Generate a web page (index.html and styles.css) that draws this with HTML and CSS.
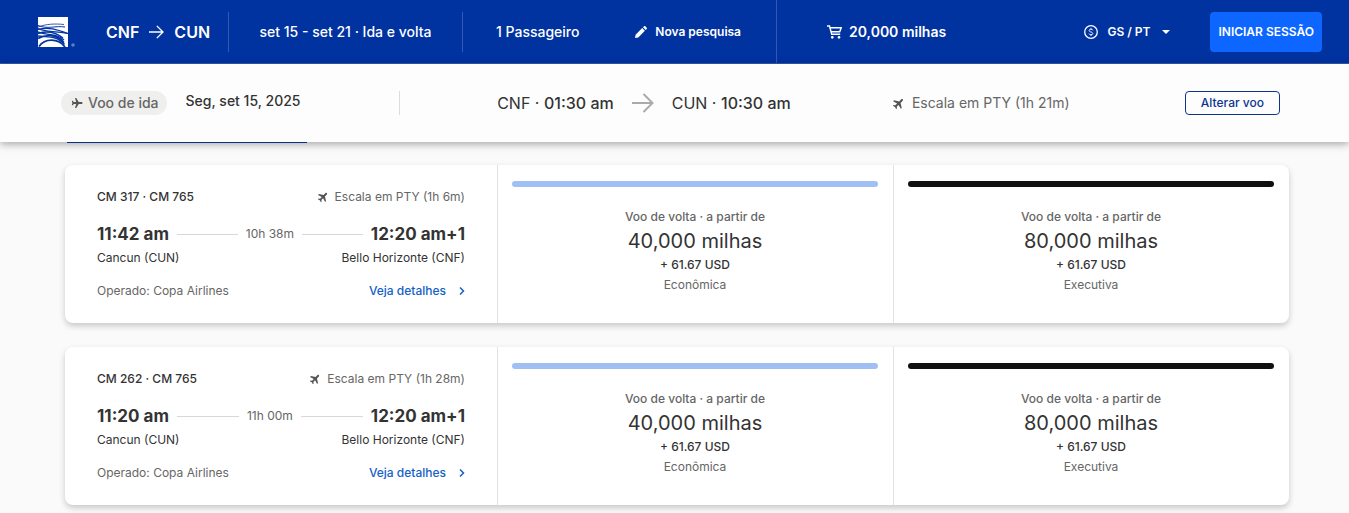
FILE: index.html
```html
<!DOCTYPE html>
<html lang="pt">
<head>
    <meta charset="UTF-8">
    <meta name="viewport" content="width=device-width, initial-scale=1.0">
    <title>Selecione seu voo</title>
    <link rel="stylesheet" href="styles.css">
</head>
<body>
    <!-- shared icons -->
    <svg class="sprite" aria-hidden="true">
        <symbol id="plane" viewBox="0 0 24 24">
            <path d="M23 12c0-1.100-.9-1.900-1.900-1.900H15.500L10.500 2H8l2.300 8.100H5.500L3.700 7.600H1.500L2.800 12l-1.300 4.400h2.200l1.800-2.500h4.800L8 22h2.500l5-8.100h5.600c1 0 1.900-.8 1.900-1.900z"/>
        </symbol>
        <symbol id="arrow" viewBox="0 0 22 20">
            <path d="M0 10h21M11.500 1l9 9-9 9" fill="none" stroke="currentColor" stroke-width="2"/>
        </symbol>
        <symbol id="chevron" viewBox="0 0 6 10">
            <path d="M1 1.500L4.500 5 1 8.500" fill="none" stroke="currentColor" stroke-width="1.500"/>
        </symbol>
    </svg>

    <header class="topbar">
        <div class="topbar-route">
            <a href="#" class="logo" aria-label="Copa Airlines">
                <svg width="37" height="30" viewBox="0 0 37 30">
                    <path fill="#fff" d="M0 0h30v30H0z"/>
                    <g fill="none" stroke="#0032a0">
                        <path stroke-width=".8" d="M0 10C8 7 17 6.500 26 7.500"/>
                        <path stroke-width="1" d="M0 8.500C9 12.500 18 8.500 27 10"/>
                        <path stroke-width="1.300" d="M0 12.500C10 9.500 19 12.500 30 16.500"/>
                        <path stroke-width="1.200" d="M0 11.500c8 4 15 2 30 5"/>
                        <path stroke-width="1.400" d="M0 16.500c9-3 18-1 25 4.500"/>
                        <path stroke-width="1.400" d="M0 15c9 4 18 .5 26 8"/>
                        <path stroke-width="1.600" d="M0 21.500C8 17 19 17 26 25.500"/>
                        <path stroke-width="1.400" d="M0 19c9 1.500 19-1 26.500 8.500"/>
                        <path stroke-width="1.800" d="M1 29.500c6-8.500 19-8.500 26 .5"/>
                    </g>
                    <circle cx="35" cy="28" r="1.800" fill="#5b7fd0"/>
                </svg>
            </a>
            <div class="route">
                <span>CNF</span>
                <svg width="15" height="14"><use href="#arrow"/></svg>
                <span>CUN</span>
            </div>
        </div>
        <div class="topbar-dates">set 15 - set 21 · Ida e volta</div>
        <div class="topbar-search">
            <span>1 Passageiro</span>
            <button class="new-search">
                <svg width="12" height="12" viewBox="0 0 12 12" fill="currentColor"><path d="M0 12l.6-3.300L7.200 2.100l2.700 2.700-6.600 6.600zM8 1.300L9 .3c.4-.4.9-.4 1.300 0l1.400 1.400c.4.4.4.9 0 1.300l-1 1z"/></svg>
                Nova pesquisa
            </button>
        </div>
        <div class="topbar-total">
            <svg width="15" height="14" viewBox="0 0 15 14" fill="none" stroke="currentColor" stroke-width="1.400"><path d="M0 1h2.500l2.200 8.300h8.500M3 2.800h11.200l-1.500 4H4.200"/><circle cx="5.300" cy="12.300" r=".7"/><circle cx="12" cy="12.300" r=".7"/></svg>
            20,000 milhas
        </div>
        <div class="topbar-user">
            <button class="locale">
                <svg width="14" height="14" viewBox="0 0 14 14" fill="none" stroke="currentColor"><circle cx="7" cy="7" r="6.300" stroke-width="1.300"/><path d="M8.800 5.300C8.600 4.500 7.900 4.200 7 4.200c-2.300 0-2.400 2.300-.4 2.700 2.900.5 2.800 2.900.4 2.900-1 0-1.700-.4-1.900-1.200M7 3.200v1M7 9.800v1"/></svg>
                GS / PT
                <svg class="caret" width="8" height="4" viewBox="0 0 8 4" fill="currentColor"><path d="M0 0h8L4 4z"/></svg>
            </button>
            <button class="login">INICIAR SESSÃO</button>
        </div>
    </header>

    <section class="selected">
        <div class="selected-date">
            <span class="pill"><svg width="12" height="12"><use href="#plane"/></svg>Voo de ida</span>
            <span class="date">Seg, set 15, 2025</span>
        </div>
        <div class="selected-times">
            <span>CNF · <b>01:30 am</b></span>
            <svg width="22" height="20"><use href="#arrow"/></svg>
            <span>CUN · <b>10:30 am</b></span>
        </div>
        <div class="selected-stop"><svg class="plane-up" width="13" height="13"><use href="#plane"/></svg>Escala em PTY (1h 21m)</div>
        <button class="change">Alterar voo</button>
    </section>

    <main class="flights">
        <div class="tab-line"></div>

        <article class="card">
            <div class="info">
                <div class="row">
                    <span class="number">CM 317 · CM 765</span>
                    <span class="stop"><svg class="plane-up" width="12" height="12"><use href="#plane"/></svg>Escala em PTY (1h 6m)</span>
                </div>
                <div class="row times">
                    <span class="time">11:42 am</span>
                    <span class="duration">10h 38m</span>
                    <span class="time">12:20 am+1</span>
                </div>
                <div class="row cities">
                    <span>Cancun (CUN)</span>
                    <span>Bello Horizonte (CNF)</span>
                </div>
                <div class="row operated">
                    <span>Operado: Copa Airlines</span>
                    <a href="#" class="details">Veja detalhes <svg width="6" height="10"><use href="#chevron"/></svg></a>
                </div>
            </div>
            <div class="fare">
                <div class="bar economy"></div>
                <span class="from">Voo de volta · a partir de</span>
                <span class="miles">40,000 milhas</span>
                <span class="tax">+ 61.67 USD</span>
                <span class="cabin">Econômica</span>
            </div>
            <div class="fare">
                <div class="bar business"></div>
                <span class="from">Voo de volta · a partir de</span>
                <span class="miles">80,000 milhas</span>
                <span class="tax">+ 61.67 USD</span>
                <span class="cabin">Executiva</span>
            </div>
        </article>

        <article class="card">
            <div class="info">
                <div class="row">
                    <span class="number">CM 262 · CM 765</span>
                    <span class="stop"><svg class="plane-up" width="12" height="12"><use href="#plane"/></svg>Escala em PTY (1h 28m)</span>
                </div>
                <div class="row times">
                    <span class="time">11:20 am</span>
                    <span class="duration">11h 00m</span>
                    <span class="time">12:20 am+1</span>
                </div>
                <div class="row cities">
                    <span>Cancun (CUN)</span>
                    <span>Bello Horizonte (CNF)</span>
                </div>
                <div class="row operated">
                    <span>Operado: Copa Airlines</span>
                    <a href="#" class="details">Veja detalhes <svg width="6" height="10"><use href="#chevron"/></svg></a>
                </div>
            </div>
            <div class="fare">
                <div class="bar economy"></div>
                <span class="from">Voo de volta · a partir de</span>
                <span class="miles">40,000 milhas</span>
                <span class="tax">+ 61.67 USD</span>
                <span class="cabin">Econômica</span>
            </div>
            <div class="fare">
                <div class="bar business"></div>
                <span class="from">Voo de volta · a partir de</span>
                <span class="miles">80,000 milhas</span>
                <span class="tax">+ 61.67 USD</span>
                <span class="cabin">Executiva</span>
            </div>
        </article>
    </main>
</body>
</html>
```
FILE: styles.css
```css
* {
    box-sizing: border-box;
}

body {
    margin: 0;
    font-family: Inter, "Liberation Sans", sans-serif;
    font-size: 12px;
    line-height: 16px;
    color: #333;
    background-color: #fafafa;
}

button {
    font: inherit;
    color: inherit;
    background: none;
    border: 0;
    padding: 0;
    cursor: pointer;
    white-space: nowrap;
}

svg {
    flex-shrink: 0;
}

.sprite {
    display: none;
}

/* top bar */
.topbar {
    display: grid;
    grid-template-columns: 229px 234px 314px auto 1fr;
    align-items: center;
    height: 64px;
    color: #fff;
    background-color: #0032a0;
    border-bottom: 1px solid #3359b2;
    font-size: 14px;
    font-weight: 500;
    line-height: 20px;
    white-space: nowrap;
}

.topbar-route,
.topbar-dates {
    display: flex;
    align-items: center;
    height: 40px;
    border-right: 1px solid #3359b2;
}

.topbar-route {
    gap: 31px;
    padding-left: 38px;
}

.logo {
    display: flex;
}

.route {
    display: flex;
    align-items: center;
    gap: 10px;
    font-size: 16px;
    font-weight: 600;
}

.topbar-dates {
    justify-content: center;
}

.topbar-search {
    display: flex;
    align-items: center;
    justify-content: space-between;
    height: 100%;
    padding: 0 35px 0 33px;
    border-right: 1px solid #3359b2;
}

.new-search {
    display: flex;
    align-items: center;
    gap: 8px;
    font-size: 12px;
    font-weight: 600;
}

.topbar-total {
    display: flex;
    align-items: center;
    gap: 7px;
    padding-left: 50px;
    font-weight: 600;
}

.topbar-user {
    display: flex;
    align-items: center;
    justify-content: flex-end;
    gap: 40px;
    padding-right: 27px;
    font-size: 12px;
    font-weight: 600;
}

.locale {
    display: flex;
    align-items: center;
    gap: 9px;
}

.caret {
    margin-left: 3px;
}

.login {
    height: 40px;
    padding: 0 8px;
    background-color: #0d66ff;
    border-radius: 4px;
}

/* outbound flight already chosen */
.selected {
    position: relative;
    display: grid;
    grid-template-columns: 339px 488fr 297fr auto;
    align-items: center;
    height: 78px;
    padding: 0 69px 0 61px;
    background-color: #fdfdfd;
    box-shadow: 0 2px 8px rgba(0, 0, 0, 0.35);
    font-size: 14px;
    white-space: nowrap;
}

.selected-date {
    display: flex;
    align-items: center;
    gap: 19px;
    height: 24px;
    border-right: 1px solid #ddd;
    font-weight: 500;
}

.date {
    padding-bottom: 4px;
}

.pill {
    display: flex;
    align-items: center;
    gap: 5px;
    height: 24px;
    padding: 0 8px 0 10px;
    color: #666;
    background-color: #efefed;
    border-radius: 12px;
}

.pill svg,
.plane-up {
    fill: #555;
}

.plane-up {
    transform: rotate(-45deg);
}

.selected-times {
    display: flex;
    align-items: center;
    justify-content: center;
    gap: 18px;
    font-size: 16px;
}

.selected-times b {
    font-weight: 500;
}

.selected-times svg {
    color: #aaa;
}

.selected-stop {
    display: flex;
    align-items: center;
    gap: 7px;
    padding-left: 4px;
    color: #666;
}

.change {
    height: 24px;
    padding: 0 15px;
    color: #0c3592;
    border: 1px solid #0c3592;
    border-radius: 4px;
    font-size: 12px;
    font-weight: 500;
}

/* results */
.flights {
    padding: 0 60px 8px 65px;
}

.tab-line {
    position: relative;
    width: 240px;
    height: 1px;
    margin: 0 0 22px 2px;
    background-color: #0c2f86;
}

.card {
    display: grid;
    grid-template-columns: 432fr 396fr 396fr;
    margin-bottom: 24px;
    background-color: #fff;
    border-radius: 8px;
    box-shadow: 0 3px 6px rgba(0, 0, 0, 0.2);
}

.info {
    padding: 24px 32px;
}

.row {
    display: flex;
    align-items: center;
    justify-content: space-between;
    white-space: nowrap;
}

.number {
    font-weight: 500;
}

.stop {
    display: flex;
    align-items: center;
    gap: 6px;
    color: #666;
}

.times {
    gap: 8px;
    margin-top: 16px;
}

.time {
    font-size: 17px;
    font-weight: 700;
    line-height: 26px;
}

.duration {
    display: flex;
    flex: 1;
    align-items: center;
    gap: 8px;
    color: #666;
}

.duration::before,
.duration::after {
    content: "";
    flex: 1;
    height: 1px;
    background-color: #d8d8d8;
}

.cities {
    margin-top: 2px;
    line-height: 18px;
}

.operated {
    margin-top: 16px;
    color: #666;
}

.details {
    display: flex;
    align-items: center;
    gap: 13px;
    color: #1560c8;
    font-weight: 500;
    text-decoration: none;
}

.fare {
    display: flex;
    flex-direction: column;
    align-items: center;
    padding: 16px 15px 16px 14px;
    border-left: 1px solid #e2e2e2;
}

.bar {
    align-self: stretch;
    height: 6px;
    margin-bottom: 22px;
    border-radius: 3px;
}

.economy {
    background-color: #a0c0f5;
}

.business {
    background-color: #101010;
}

.from {
    color: #666;
    font-weight: 500;
}

.miles {
    font-size: 20px;
    line-height: 32px;
}

.tax {
    font-weight: 500;
}

.cabin {
    margin-top: 4px;
    color: #666;
}
```
